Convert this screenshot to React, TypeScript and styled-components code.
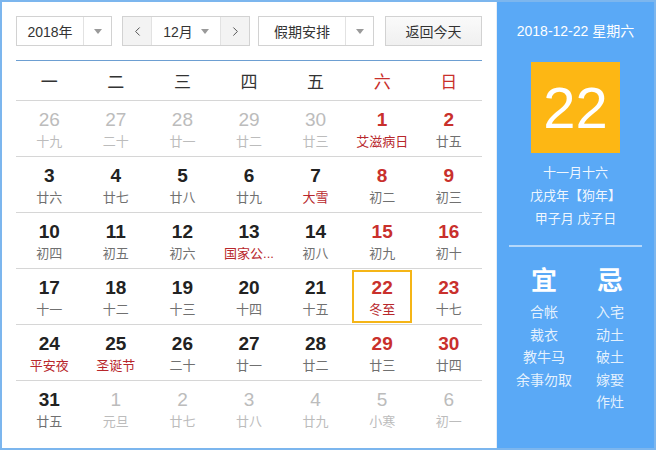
import styled, { createGlobalStyle, css } from 'styled-components';
import { ChevronLeft, ChevronRight } from 'lucide-react';

const GlobalStyle = createGlobalStyle`
    html, body {
        margin: 0;
        padding: 0;
        background: #ffffff;
    }
    body {
        font-family: "Liberation Sans", "Noto Sans CJK SC", sans-serif;
        color: #333;
    }
    * {
        box-sizing: border-box;
    }
`;

const CJK = `"Liberation Sans", "Noto Sans CJK SC", sans-serif`;

const RED = '#c9302c';

const Frame = styled.div`
    display: flex;
    width: 656px;
    height: 450px;
    border: 2px solid #7cb6ee;
    background: #ffffff;
`;

const Main = styled.div`
    flex: 1;
    display: flex;
    flex-direction: column;
    padding: 14px 14px 0;
    border-right: 1px solid #e6eef7;
`;

const Toolbar = styled.div`
    display: flex;
    height: 30px;
    align-items: stretch;
`;

const SelectBox = styled.div<{ $width: number; $gap?: number }>`
    display: flex;
    width: ${({ $width }) => $width}px;
    margin-left: ${({ $gap }) => $gap ?? 0}px;
    border: 1px solid #d2d2d2;
    background: #fff;
    font-family: ${CJK};
    font-size: 14px;
    color: #333;
`;

const SelectLabel = styled.div`
    flex: 1;
    display: flex;
    align-items: center;
    justify-content: center;
`;

const CaretCell = styled.div`
    width: 28px;
    display: flex;
    align-items: center;
    justify-content: center;
    border-left: 1px solid #e2e2e2;
`;

const Caret = styled.span`
    display: inline-block;
    width: 0;
    height: 0;
    border-left: 4px solid transparent;
    border-right: 4px solid transparent;
    border-top: 5px solid #9a9a9a;
`;

const ArrowButton = styled.div`
    width: 28px;
    display: flex;
    align-items: center;
    justify-content: center;
    background: #f3f3f3;
    color: #555;
`;

const MonthLabel = styled.div`
    flex: 1;
    display: flex;
    align-items: center;
    justify-content: center;
    gap: 8px;
    border-left: 1px solid #e2e2e2;
    border-right: 1px solid #e2e2e2;
`;

const TodayButton = styled.div`
    margin-left: 11px;
    flex: 1;
    display: flex;
    align-items: center;
    justify-content: center;
    border: 1px solid #d2d2d2;
    background: linear-gradient(#fafafa, #f0f0f0);
    font-family: ${CJK};
    font-size: 14px;
    color: #333;
`;

const HeaderLine = styled.div`
    margin-top: 14px;
    height: 1px;
    background: #6d9fd2;
`;

const WeekHeader = styled.div`
    display: grid;
    grid-template-columns: repeat(7, 1fr);
    height: 40px;
    align-items: center;
    border-bottom: 1px solid #d6d6d6;
`;

const WeekdayLabel = styled.div<{ $weekend?: boolean }>`
    text-align: center;
    font-family: ${CJK};
    font-size: 17px;
    color: ${({ $weekend }) => ($weekend ? RED : '#333')};
`;

const WeekRow = styled.div<{ $last?: boolean }>`
    display: grid;
    grid-template-columns: repeat(7, 1fr);
    height: 56px;
    border-bottom: ${({ $last }) => ($last ? 'none' : '1px solid #d6d6d6')};
`;

const DayCell = styled.div<{ $selected?: boolean }>`
    display: flex;
    flex-direction: column;
    align-items: center;
    margin: 1px 3px;
    padding-top: 5px;
    border: 2px solid transparent;
    ${({ $selected }) =>
        $selected &&
        css`
            border-color: #f5b517;
        `}
`;

const DayNumber = styled.div<{ $tone: 'normal' | 'red' | 'other' }>`
    font-family: "Liberation Sans", Arial, sans-serif;
    font-size: 19px;
    line-height: 22px;
    font-weight: ${({ $tone }) => ($tone === 'other' ? 400 : 700)};
    color: ${({ $tone }) => ($tone === 'red' ? RED : $tone === 'other' ? '#bcbcbc' : '#222')};
`;

const Lunar = styled.div<{ $tone: 'normal' | 'red' | 'other' }>`
    margin-top: 2px;
    font-family: ${CJK};
    font-size: 13px;
    line-height: 18px;
    white-space: nowrap;
    color: ${({ $tone }) => ($tone === 'red' ? '#b8272c' : $tone === 'other' ? '#bcbcbc' : '#707070')};
`;

const Side = styled.div`
    width: 157px;
    display: flex;
    flex-direction: column;
    align-items: center;
    background: #5aa9f6;
    color: #fff;
    font-family: ${CJK};
`;

const SideDate = styled.div`
    margin-top: 20px;
    font-size: 14px;
    line-height: 18px;
`;

const TodayBox = styled.div`
    margin-top: 22px;
    width: 89px;
    height: 91px;
    display: flex;
    align-items: center;
    justify-content: center;
    background: #fdb714;
    font-family: "Liberation Sans", Arial, sans-serif;
    font-size: 58px;
    color: #fff;
`;

const LunarInfo = styled.div`
    margin-top: 8px;
    display: flex;
    flex-direction: column;
    align-items: center;
    font-size: 13px;
    line-height: 23px;
    color: rgba(255, 255, 255, 0.92);
`;

const SideDivider = styled.div`
    margin-top: 15px;
    width: 133px;
    height: 2px;
    background: rgba(255, 255, 255, 0.55);
`;

const AdviceGrid = styled.div`
    margin-top: 18px;
    margin-left: 3px;
    display: grid;
    grid-template-columns: 66px 66px;
`;

const AdviceColumn = styled.div`
    display: flex;
    flex-direction: column;
    align-items: center;
`;

const AdviceTitle = styled.div`
    font-size: 26px;
    line-height: 32px;
    font-weight: 700;
    color: #fff;
    margin-bottom: 4px;
`;

const AdviceItem = styled.div`
    font-size: 14px;
    line-height: 22.5px;
    color: rgba(255, 255, 255, 0.85);
    white-space: nowrap;
`;

type Cell = {
    day: number;
    lunar: string;
    other?: boolean;
    redDay?: boolean;
    redLunar?: boolean;
    selected?: boolean;
};

const weeks: Cell[][] = [
    [
        { day: 26, lunar: '十九', other: true },
        { day: 27, lunar: '二十', other: true },
        { day: 28, lunar: '廿一', other: true },
        { day: 29, lunar: '廿二', other: true },
        { day: 30, lunar: '廿三', other: true },
        { day: 1, lunar: '艾滋病日', redDay: true, redLunar: true },
        { day: 2, lunar: '廿五', redDay: true },
    ],
    [
        { day: 3, lunar: '廿六' },
        { day: 4, lunar: '廿七' },
        { day: 5, lunar: '廿八' },
        { day: 6, lunar: '廿九' },
        { day: 7, lunar: '大雪', redLunar: true },
        { day: 8, lunar: '初二', redDay: true },
        { day: 9, lunar: '初三', redDay: true },
    ],
    [
        { day: 10, lunar: '初四' },
        { day: 11, lunar: '初五' },
        { day: 12, lunar: '初六' },
        { day: 13, lunar: '国家公...', redLunar: true },
        { day: 14, lunar: '初八' },
        { day: 15, lunar: '初九', redDay: true },
        { day: 16, lunar: '初十', redDay: true },
    ],
    [
        { day: 17, lunar: '十一' },
        { day: 18, lunar: '十二' },
        { day: 19, lunar: '十三' },
        { day: 20, lunar: '十四' },
        { day: 21, lunar: '十五' },
        { day: 22, lunar: '冬至', redDay: true, redLunar: true, selected: true },
        { day: 23, lunar: '十七', redDay: true },
    ],
    [
        { day: 24, lunar: '平安夜', redLunar: true },
        { day: 25, lunar: '圣诞节', redLunar: true },
        { day: 26, lunar: '二十' },
        { day: 27, lunar: '廿一' },
        { day: 28, lunar: '廿二' },
        { day: 29, lunar: '廿三', redDay: true },
        { day: 30, lunar: '廿四', redDay: true },
    ],
    [
        { day: 31, lunar: '廿五' },
        { day: 1, lunar: '元旦', other: true },
        { day: 2, lunar: '廿七', other: true },
        { day: 3, lunar: '廿八', other: true },
        { day: 4, lunar: '廿九', other: true },
        { day: 5, lunar: '小寒', other: true },
        { day: 6, lunar: '初一', other: true },
    ],
];

const weekdays = ['一', '二', '三', '四', '五', '六', '日'];

const good = ['合帐', '裁衣', '教牛马', '余事勿取'];
const bad = ['入宅', '动土', '破土', '嫁娶', '作灶'];

const App = () => (
    <>
        <GlobalStyle />
        <Frame>
            <Main>
                <Toolbar>
                    <SelectBox $width={96}>
                        <SelectLabel>2018年</SelectLabel>
                        <CaretCell>
                            <Caret />
                        </CaretCell>
                    </SelectBox>
                    <SelectBox $width={128} $gap={10}>
                        <ArrowButton>
                            <ChevronLeft size={15} strokeWidth={1.6} />
                        </ArrowButton>
                        <MonthLabel>
                            12月 <Caret />
                        </MonthLabel>
                        <ArrowButton>
                            <ChevronRight size={15} strokeWidth={1.6} />
                        </ArrowButton>
                    </SelectBox>
                    <SelectBox $width={116} $gap={8}>
                        <SelectLabel>假期安排</SelectLabel>
                        <CaretCell>
                            <Caret />
                        </CaretCell>
                    </SelectBox>
                    <TodayButton>返回今天</TodayButton>
                </Toolbar>
                <HeaderLine />
                <WeekHeader>
                    {weekdays.map((w, i) => (
                        <WeekdayLabel key={w} $weekend={i >= 5}>
                            {w}
                        </WeekdayLabel>
                    ))}
                </WeekHeader>
                {weeks.map((week, wi) => (
                    <WeekRow key={wi} $last={wi === weeks.length - 1}>
                        {week.map((cell, ci) => {
                            const dayTone = cell.other ? 'other' : cell.redDay ? 'red' : 'normal';
                            const lunarTone = cell.other ? 'other' : cell.redLunar ? 'red' : 'normal';
                            return (
                                <DayCell key={ci} $selected={cell.selected}>
                                    <DayNumber $tone={dayTone}>{cell.day}</DayNumber>
                                    <Lunar $tone={lunarTone}>{cell.lunar}</Lunar>
                                </DayCell>
                            );
                        })}
                    </WeekRow>
                ))}
            </Main>
            <Side>
                <SideDate>2018-12-22 星期六</SideDate>
                <TodayBox>22</TodayBox>
                <LunarInfo>
                    <span>十一月十六</span>
                    <span>戊戌年【狗年】</span>
                    <span>甲子月 戊子日</span>
                </LunarInfo>
                <SideDivider />
                <AdviceGrid>
                    <AdviceColumn>
                        <AdviceTitle>宜</AdviceTitle>
                        {good.map(g => (
                            <AdviceItem key={g}>{g}</AdviceItem>
                        ))}
                    </AdviceColumn>
                    <AdviceColumn>
                        <AdviceTitle>忌</AdviceTitle>
                        {bad.map(b => (
                            <AdviceItem key={b}>{b}</AdviceItem>
                        ))}
                    </AdviceColumn>
                </AdviceGrid>
            </Side>
        </Frame>
    </>
);

export default App;
